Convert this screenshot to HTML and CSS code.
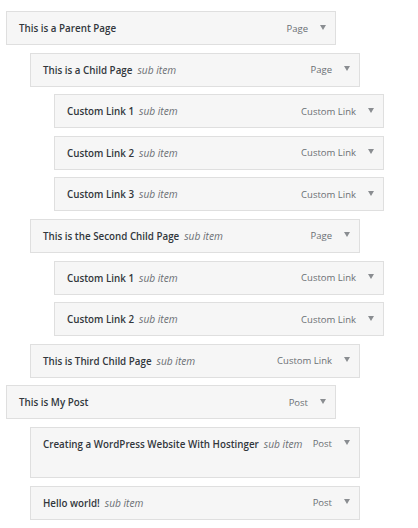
FILE: index.html
```html
<!DOCTYPE html>
<html>
<head>
<meta charset="utf-8">
<link rel="stylesheet" href="styles.css">
</head>
<body>
<ul class="menu">
  <li class="item depth-0"><div class="handle"><span class="title">This is a Parent Page</span><span class="controls"><span class="type">Page</span><span class="arrow"></span></span></div></li>
  <li class="item depth-1"><div class="handle"><span class="title">This is a Child Page<span class="sub">sub item</span></span><span class="controls"><span class="type">Page</span><span class="arrow"></span></span></div></li>
  <li class="item depth-2"><div class="handle"><span class="title">Custom Link 1<span class="sub">sub item</span></span><span class="controls"><span class="type">Custom Link</span><span class="arrow"></span></span></div></li>
  <li class="item depth-2"><div class="handle"><span class="title">Custom Link 2<span class="sub">sub item</span></span><span class="controls"><span class="type">Custom Link</span><span class="arrow"></span></span></div></li>
  <li class="item depth-2"><div class="handle"><span class="title">Custom Link 3<span class="sub">sub item</span></span><span class="controls"><span class="type">Custom Link</span><span class="arrow"></span></span></div></li>
  <li class="item depth-1"><div class="handle"><span class="title">This is the Second Child Page<span class="sub">sub item</span></span><span class="controls"><span class="type">Page</span><span class="arrow"></span></span></div></li>
  <li class="item depth-2"><div class="handle"><span class="title">Custom Link 1<span class="sub">sub item</span></span><span class="controls"><span class="type">Custom Link</span><span class="arrow"></span></span></div></li>
  <li class="item depth-2"><div class="handle"><span class="title">Custom Link 2<span class="sub">sub item</span></span><span class="controls"><span class="type">Custom Link</span><span class="arrow"></span></span></div></li>
  <li class="item depth-1"><div class="handle"><span class="title">This is Third Child Page<span class="sub">sub item</span></span><span class="controls"><span class="type">Custom Link</span><span class="arrow"></span></span></div></li>
  <li class="item depth-0"><div class="handle"><span class="title">This is My Post</span><span class="controls"><span class="type">Post</span><span class="arrow"></span></span></div></li>
  <li class="item depth-1"><div class="handle tall"><span class="title">Creating a WordPress Website With Hostinger<span class="sub">sub item</span></span><span class="controls"><span class="type">Post</span><span class="arrow"></span></span></div></li>
  <li class="item depth-1"><div class="handle"><span class="title">Hello world!<span class="sub">sub item</span></span><span class="controls"><span class="type">Post</span><span class="arrow"></span></span></div></li>
</ul>
</body>
</html>
```

FILE: styles.css
```css
html, body {
  margin: 0;
  padding: 0;
  background: #ffffff;
}

body {
  font-family: "Open Sans", "Noto Sans", sans-serif;
  color: #32373c;
}

.menu {
  list-style: none;
  margin: 0;
  padding: 11px 0 0 6px;
  display: flex;
  flex-direction: column;
  gap: 7.6px;
}

.item {
  width: 330px;
}

.depth-1 { margin-left: 24px; }
.depth-2 { margin-left: 48px; }

.handle {
  box-sizing: border-box;
  height: 34px;
  display: flex;
  align-items: flex-start;
  border: 1px solid #dfdfdf;
  background: #f6f6f6;
  padding: 0 9px 0 12px;
  line-height: 33px;
}

.handle.tall {
  height: 51px;
}

.title {
  flex: 1;
  font-size: 9.8px;
  font-weight: 600;
  color: #32373c;
  white-space: nowrap;
}

.sub {
  font-size: 10.2px;
  font-weight: 400;
  font-style: italic;
  color: #6b6f74;
  margin-left: 5px;
}

.controls {
  display: flex;
  align-items: center;
  height: 32px;
  gap: 12px;
}

.type {
  font-size: 9.5px;
  color: #6b6f74;
}

.arrow {
  width: 0;
  height: 0;
  border-left: 3.5px solid transparent;
  border-right: 3.5px solid transparent;
  border-top: 5px solid #8a8d91;
  margin-top: -2px;
}
```
